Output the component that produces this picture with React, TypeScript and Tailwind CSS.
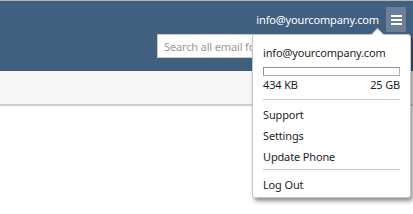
const FONT = "font-['Segoe_UI','Noto_Sans','Open_Sans',sans-serif]";

function MenuIcon() {
    return (
        <svg width="11" height="10" viewBox="0 0 11 10" className="block">
            <rect x="0" y="0" width="11" height="2" fill="#fff" />
            <rect x="0" y="4" width="11" height="2" fill="#fff" />
            <rect x="0" y="8" width="11" height="2" fill="#fff" />
        </svg>
    );
}

export default function App() {
    return (
        <div className={`relative h-[214px] w-[413px] overflow-hidden bg-white text-[11px] tracking-[-0.15px] ${FONT}`}>
            <div className="border-t border-[#b4b4b4]" />
            {/* header bar */}
            <header className="flex h-[70px] flex-col bg-[#41607f]">
                <div className="flex items-center justify-end gap-[7px] pr-[7px] pt-[6px]">
                    <span className="leading-[18px] text-white">info@yourcompany.com</span>
                    <button
                        type="button"
                        className="flex h-[25px] w-[20px] items-center justify-center bg-[#6b7f98]"
                    >
                        <MenuIcon />
                    </button>
                </div>
                <div className="mt-[2px] flex justify-end pr-[9px]">
                    <input
                        readOnly
                        placeholder="Search all email folders"
                        className="h-[24px] w-[247px] border border-[#c8c8c8] bg-white px-[6px] text-[11px] text-[#333] outline-none placeholder:text-[#999]"
                    />
                </div>
            </header>
            <div className="h-[35px] border-b-2 border-[#cdcdcd] bg-[#f6f6f6]" />

            {/* account dropdown */}
            <div className="absolute left-[252px] top-[34px] w-[159px] rounded-[3px] border border-[#c6c6c6] bg-white px-[10px] pb-[2px] pt-[9px] text-[#1e1e1e] shadow-[2px_3px_4px_rgba(0,0,0,0.45)]">
                <div className="absolute -top-[5px] left-[120px] h-[9px] w-[9px] rotate-45 border-l border-t border-[#c6c6c6] bg-white" />
                <div className="relative leading-[18px]">info@yourcompany.com</div>
                <div className="mt-[5px] h-[9px] border border-[#b0b0b0] border-t-[#8f8f8f] border-l-[#8f8f8f] bg-white" />
                <div className="flex justify-between leading-[18px]">
                    <span>434 KB</span>
                    <span>25 GB</span>
                </div>
                <div className="mt-[5px] h-px bg-[#cccccc]" />
                <ul className="mt-[4px]">
                    <li className="leading-[21px]">Support</li>
                    <li className="leading-[21px]">Settings</li>
                    <li className="leading-[21px]">Update Phone</li>
                </ul>
                <div className="mt-[2px] h-px bg-[#cccccc]" />
                <div className="mt-[4px] leading-[21px]">Log Out</div>
            </div>
        </div>
    );
}
